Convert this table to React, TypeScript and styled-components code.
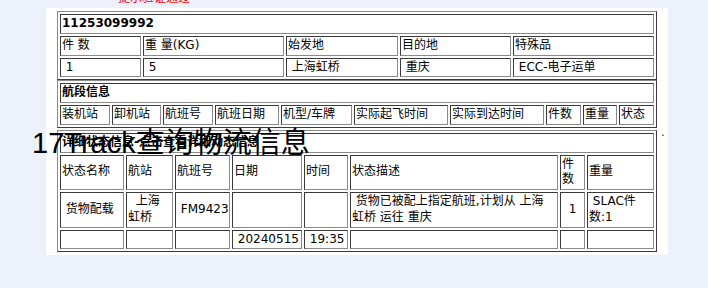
import React from "react";
import styled, { createGlobalStyle } from "styled-components";

const GlobalStyle = createGlobalStyle`
  html, body {
    margin: 0;
    padding: 0;
    background: #edf1fb;
  }
  body {
    font-family: "DejaVu Sans", "Noto Sans CJK SC", sans-serif;
    overflow: hidden;
  }
`;

const Page = styled.div`
  position: relative;
  width: 708px;
  height: 288px;
  display: flex;
  flex-direction: column;
`;

const Notice = styled.div`
  margin-top: -9px;
  padding-left: 118px;
  height: 14px;
  line-height: 14px;
  font-size: 12px;
  color: #ff0000;
  font-family: "DejaVu Sans", "Noto Sans CJK SC", sans-serif;
`;

const Panel = styled.div`
  margin-top: 3px;
  margin-left: 46px;
  width: 611px;
  padding: 3px 0 3px 11px;
  background: #ffffff;
  display: flex;
  flex-direction: column;
`;

const Grid = styled.table<{ $gap?: number }>`
  margin-top: ${(p) => p.$gap ?? 0}px;
  width: 600px;
  table-layout: fixed;
  border-collapse: separate;
  border-spacing: 2px;
  border: 1px solid;
  border-color: #8a8a8a #3a3a3a #3a3a3a #8a8a8a;
  font-size: 12px;
  line-height: 15.75px;
  color: #000;
  font-family: "DejaVu Sans", "Noto Sans CJK SC", sans-serif;
`;

const Cell = styled.td<{ $bold?: boolean; $center?: boolean }>`
  box-sizing: border-box;
  border: 1px solid;
  border-color: #3a3a3a #8a8a8a #8a8a8a #3a3a3a;
  padding: 1px;
  vertical-align: middle;
  text-align: ${(p) => (p.$center ? "center" : "left")};
  font-weight: ${(p) => (p.$bold ? "bold" : "normal")};
  overflow: hidden;
`;

const Title = styled.div`
  position: absolute;
  left: 32px;
  top: 127px;
  font-family: "Liberation Sans", "Noto Sans CJK SC", sans-serif;
  font-size: 29px;
  line-height: 32px;
  color: #000;
  white-space: nowrap;
`;

const Dot = styled.span`
  position: absolute;
  left: 661px;
  top: 125px;
  font-size: 12px;
  line-height: 14px;
  color: #2a3a8a;
`;

const NB = "\u00a0";

const t1Cols = [81, 141, 112, 111, 141];
const t2Cols = [50, 49, 50, 64, 71, 94, 94, 35, 34, 35];
const t3Cols = [64, 47, 55, 70, 44, 208, 25, 67];

const Cols: React.FC<{ widths: number[] }> = ({ widths }) => (
  <colgroup>
    {widths.map((w, i) => (
      <col key={i} style={{ width: w }} />
    ))}
  </colgroup>
);

const segHeaders = [
  "装机站",
  "卸机站",
  "航班号",
  "航班日期",
  "机型/车牌",
  "实际起飞时间",
  "实际到达时间",
  "件数",
  "重量",
  "状态",
];

const statusHeaders = ["状态名称", "航站", "航班号", "日期", "时间", "状态描述", "件数", "重量"];

export default function App() {
  return (
    <Page>
      <GlobalStyle />
      <Notice>提示验证通过</Notice>
      <Panel>
        <Grid>
          <Cols widths={t1Cols} />
          <tbody>
            <tr>
              <Cell colSpan={5} $bold>
                11253099992
              </Cell>
            </tr>
            <tr>
              <Cell>件 数</Cell>
              <Cell>重 量(KG)</Cell>
              <Cell>始发地</Cell>
              <Cell>目的地</Cell>
              <Cell>特殊品</Cell>
            </tr>
            <tr>
              <Cell>{NB}1</Cell>
              <Cell>{NB}5</Cell>
              <Cell>{NB}上海虹桥</Cell>
              <Cell>{NB}重庆</Cell>
              <Cell>{NB}ECC-电子运单</Cell>
            </tr>
          </tbody>
        </Grid>
        <Grid>
          <Cols widths={t2Cols} />
          <tbody>
            <tr>
              <Cell colSpan={10} $bold>
                航段信息
              </Cell>
            </tr>
            <tr>
              {segHeaders.map((h) => (
                <Cell key={h}>{h}</Cell>
              ))}
            </tr>
          </tbody>
        </Grid>
        <Grid $gap={2}>
          <Cols widths={t3Cols} />
          <tbody>
            <tr>
              <Cell colSpan={8} $bold>
                详细状态信息-点击查看详细动态信息
              </Cell>
            </tr>
            <tr>
              {statusHeaders.map((h, i) => (
                <Cell key={i}>{h}</Cell>
              ))}
            </tr>
            <tr>
              <Cell>{NB}货物配载</Cell>
              <Cell>{NB}{NB}上海虹桥</Cell>
              <Cell>{NB}FM9423</Cell>
              <Cell></Cell>
              <Cell></Cell>
              <Cell>
                {NB}货物已被配上指定航班,计划从 上海
                <br />
                虹桥 运往 重庆
              </Cell>
              <Cell $center>1</Cell>
              <Cell>{NB}SLAC件数:1</Cell>
            </tr>
            <tr>
              <Cell></Cell>
              <Cell></Cell>
              <Cell></Cell>
              <Cell>{NB}20240515</Cell>
              <Cell>{NB}19:35</Cell>
              <Cell></Cell>
              <Cell></Cell>
              <Cell></Cell>
            </tr>
          </tbody>
        </Grid>
      </Panel>
      <Title>17Track查询物流信息</Title>
      <Dot>.</Dot>
    </Page>
  );
}
